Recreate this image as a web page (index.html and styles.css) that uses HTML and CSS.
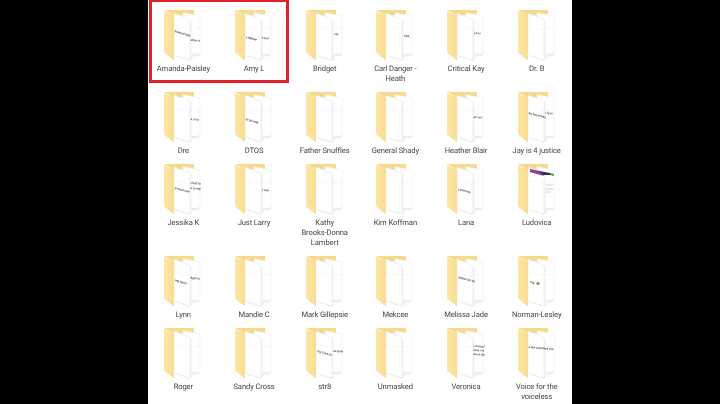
FILE: index.html
```html
<!DOCTYPE html>
<html lang="en">
<head>
  <meta charset="UTF-8" />
  <title>Folders</title>
  <link rel="stylesheet" href="styles.css">
</head>
<body>
  <svg class="defs" aria-hidden="true">
    <linearGradient id="flap" x1="0" x2="1" y1="0" y2="0">
      <stop offset="0" stop-color="#fce6a6"/>
      <stop offset="1" stop-color="#f9dd90"/>
    </linearGradient>
    <symbol id="folder" viewBox="0 0 40 52">
      <path d="M24 45 L38 44 L36 47 L27 48 Z" fill="#eeeeee"/>
      <path d="M12 47 L27 52 L30 49 L27 46 Z" fill="#f0f0f0"/>
      <path d="M1 1 H31 V7 L10 6 Z" fill="#f7d98c"/>
      <path d="M20 3.5 L37 7 V45 H22 Z" fill="#fff" stroke="#e8e8e8" stroke-width=".5"/>
      <path d="M27 20 L37 19" stroke="#ececec" stroke-width=".5" fill="none"/>
      <path d="M27 11 H28.5 V49 L27 51 Z" fill="#f3f3f3"/>
      <path d="M11 4 L27 10.5 V51 L11 46 Z" fill="#fff" stroke="#e2e2e2" stroke-width=".5"/>
      <path d="M11 17 L27 21" stroke="#eeeeee" stroke-width=".5" fill="none"/>
      <path d="M1 2 L11 6.5 V51.5 L1 43.5 Z" fill="url(#flap)"/>
    </symbol>
  </svg>

  <main class="sheet">
    <div class="grid">
      <figure class="item">
        <svg class="folder"><use href="#folder"/>
          <text class="snip" x="11.5" y="23" transform="rotate(17 11.5 23)">howard tells</text>
          <text class="snip" x="27.5" y="32" transform="rotate(4 27.5 32)">other a</text>
        </svg>
        <figcaption>Amanda-Paisley</figcaption>
      </figure>
      <figure class="item">
        <svg class="folder"><use href="#folder"/>
          <text class="snip" x="11.5" y="29" transform="rotate(14 11.5 29)">s.deliver</text>
          <text class="snip" x="28" y="30" transform="rotate(3 28 30)">l and</text>
        </svg>
        <figcaption>Amy L</figcaption>
      </figure>
      <figure class="item">
        <svg class="folder"><use href="#folder"/>
          <text class="snip" x="29" y="26" transform="rotate(4 29 26)">nts</text>
        </svg>
        <figcaption>Bridget</figcaption>
      </figure>
      <figure class="item">
        <svg class="folder"><use href="#folder"/>
          <text class="snip" x="29" y="28" transform="rotate(4 29 28)">PPA</text>
        </svg>
        <figcaption>Carl Danger - Heath</figcaption>
      </figure>
      <figure class="item">
        <svg class="folder"><use href="#folder"/>
          <text class="snip" x="28" y="25" transform="rotate(3 28 25)">y foo</text>
        </svg>
        <figcaption>Critical Kay</figcaption>
      </figure>
      <figure class="item">
        <svg class="folder"><use href="#folder"/></svg>
        <figcaption>Dr. B</figcaption>
      </figure>

      <figure class="item">
        <svg class="folder"><use href="#folder"/>
          <text class="snip" x="27.5" y="29" transform="rotate(4 27.5 29)">s d ou</text>
        </svg>
        <figcaption>Dre</figcaption>
      </figure>
      <figure class="item">
        <svg class="folder"><use href="#folder"/>
          <text class="snip" x="11.5" y="29" transform="rotate(16 11.5 29)">to do only</text>
        </svg>
        <figcaption>DTOS</figcaption>
      </figure>
      <figure class="item">
        <svg class="folder"><use href="#folder"/></svg>
        <figcaption>Father Snuffles</figcaption>
      </figure>
      <figure class="item">
        <svg class="folder"><use href="#folder"/></svg>
        <figcaption>General Shady</figcaption>
      </figure>
      <figure class="item">
        <svg class="folder"><use href="#folder"/>
          <text class="snip" x="27.5" y="27" transform="rotate(3 27.5 27)">es out</text>
        </svg>
        <figcaption>Heather Blair</figcaption>
      </figure>
      <figure class="item">
        <svg class="folder"><use href="#folder"/>
          <text class="snip" x="11.5" y="23" transform="rotate(14 11.5 23)">he forum hey</text>
          <text class="snip" x="28" y="23" transform="rotate(3 28 23)">r face</text>
        </svg>
        <figcaption>Jay is 4 justice</figcaption>
      </figure>

      <figure class="item">
        <svg class="folder"><use href="#folder"/>
          <text class="snip" x="11.5" y="26" transform="rotate(14 11.5 26)">d most wan</text>
          <text class="snip" x="27.5" y="21" transform="rotate(4 27.5 21)">t had to</text>
          <text class="snip" x="27.5" y="26" transform="rotate(4 27.5 26)">s to say</text>
        </svg>
        <figcaption>Jessika K</figcaption>
      </figure>
      <figure class="item">
        <svg class="folder"><use href="#folder"/>
          <text class="snip" x="28" y="28" transform="rotate(3 28 28)">t wan</text>
        </svg>
        <figcaption>Just Larry</figcaption>
      </figure>
      <figure class="item">
        <svg class="folder"><use href="#folder"/></svg>
        <figcaption>Kathy<br>Brooks-Donna<br>Lambert</figcaption>
      </figure>
      <figure class="item">
        <svg class="folder"><use href="#folder"/></svg>
        <figcaption>Kim Koffman</figcaption>
      </figure>
      <figure class="item">
        <svg class="folder"><use href="#folder"/>
          <text class="snip" x="12" y="27" transform="rotate(14 12 27)">y procure</text>
        </svg>
        <figcaption>Lana</figcaption>
      </figure>
      <figure class="item">
        <svg class="folder"><use href="#folder"/>
          <path class="photo" d="M13 6 L23 8 L27 13 L13 9 Z"/>
          <path class="photo-dark" d="M22 8 L33 10 L33 12 L26 12 Z"/>
          <path class="photo-green" d="M33 10 L37 11 V13 L33 12 Z"/>
          <path class="scrap" d="M29 22 H36 M29 26 H36 M29 29 H34"/>
        </svg>
        <figcaption>Ludovica</figcaption>
      </figure>

      <figure class="item">
        <svg class="folder"><use href="#folder"/>
          <text class="snip" x="12" y="26" transform="rotate(17 12 26)">ing hurts</text>
          <text class="snip" x="27.5" y="24" transform="rotate(4 27.5 24)">fight to</text>
        </svg>
        <figcaption>Lynn</figcaption>
      </figure>
      <figure class="item">
        <svg class="folder"><use href="#folder"/></svg>
        <figcaption>Mandie C</figcaption>
      </figure>
      <figure class="item">
        <svg class="folder"><use href="#folder"/></svg>
        <figcaption>Mark Gillepsie</figcaption>
      </figure>
      <figure class="item">
        <svg class="folder"><use href="#folder"/></svg>
        <figcaption>Mekcee</figcaption>
      </figure>
      <figure class="item">
        <svg class="folder"><use href="#folder"/>
          <text class="snip" x="12" y="23" transform="rotate(15 12 23)">amper las en</text>
        </svg>
        <figcaption>Melissa Jade</figcaption>
      </figure>
      <figure class="item">
        <svg class="folder"><use href="#folder"/>
          <text class="snip" x="13" y="28" transform="rotate(8 13 28)">ing</text>
          <circle class="blob" cx="21" cy="28.5" r="1.6"/>
        </svg>
        <figcaption>Norman-Lesley</figcaption>
      </figure>

      <figure class="item">
        <svg class="folder"><use href="#folder"/></svg>
        <figcaption>Roger</figcaption>
      </figure>
      <figure class="item">
        <svg class="folder"><use href="#folder"/></svg>
        <figcaption>Sandy Cross</figcaption>
      </figure>
      <figure class="item">
        <svg class="folder"><use href="#folder"/>
          <text class="snip" x="12" y="25" transform="rotate(15 12 25)">my Tues no</text>
          <text class="snip" x="28" y="25" transform="rotate(3 28 25)">ne fami</text>
        </svg>
        <figcaption>str8</figcaption>
      </figure>
      <figure class="item">
        <svg class="folder"><use href="#folder"/></svg>
        <figcaption>Unmasked</figcaption>
      </figure>
      <figure class="item">
        <svg class="folder"><use href="#folder"/>
          <text class="snip" x="27.5" y="20" transform="rotate(3 27.5 20)">r moved</text>
          <text class="snip" x="27.5" y="24" transform="rotate(3 27.5 24)">ears col</text>
          <text class="snip" x="27.5" y="28" transform="rotate(3 27.5 28)">arice dly</text>
        </svg>
        <figcaption>Veronica</figcaption>
      </figure>
      <figure class="item">
        <svg class="folder"><use href="#folder"/>
          <text class="snip" x="11.5" y="21" transform="rotate(5 11.5 21)">e the voiceless are</text>
        </svg>
        <figcaption>Voice for the voiceless</figcaption>
      </figure>
    </div>
    <div class="highlight"></div>
  </main>
</body>
</html>
```

FILE: styles.css
```css
html, body {
    height: 100%;
}
body {
    margin: 0;
    background-color: #000;
    overflow: hidden;
    font-family: 'Roboto', 'Open Sans', sans-serif;
    color: #444;
}
.defs {
    position: absolute;
    width: 0;
    height: 0;
}
.sheet {
    position: relative;
    width: 424px;
    height: 404px;
    margin-left: 148px;
    background-color: #fff;
    overflow: hidden;
}
.highlight {
    position: absolute;
    left: 1px;
    top: -1px;
    width: 134px;
    height: 78px;
    border: 3px solid #e2202c;
}
.grid {
    display: grid;
    grid-template-columns: repeat(6, 1fr);
    row-gap: 7px;
    padding-top: 9px;
    align-items: start;
    filter: blur(.3px);
}
.item {
    margin: 0;
    display: flex;
    flex-direction: column;
    align-items: center;
}
.folder {
    display: block;
    width: 40px;
    height: 52px;
}
figcaption {
    margin-top: 3px;
    padding: 0 4px;
    font-size: 7.6px;
    line-height: 10px;
    letter-spacing: -.1px;
    text-align: center;
    text-rendering: geometricPrecision;
}
.snip {
    font-size: 3px;
    font-weight: 500;
    fill: #333;
}
.photo {
    fill: #8a3f9e;
}
.photo-dark {
    fill: #3c2a4a;
}
.photo-green {
    fill: #5b8f5a;
}
.scrap {
    stroke: #bbb;
    stroke-width: .7;
    fill: none;
}
.blob {
    fill: #8d8f3a;
}
```
